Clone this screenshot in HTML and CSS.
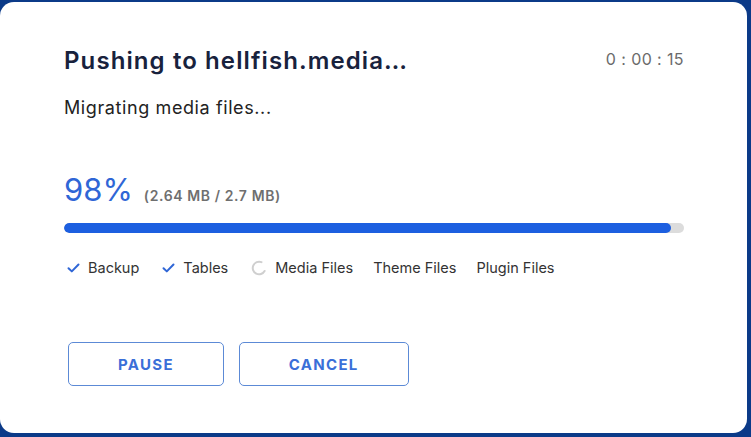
FILE: index.html
```html
<!DOCTYPE html>
<html lang="en">
<head>
    <meta charset="UTF-8">
    <title>Migration progress</title>
    <link rel="stylesheet" href="styles.css">
</head>
<body>
    <div class="card">
        <!-- Header -->
        <div class="card-header">
            <h1 class="title">Pushing to hellfish.media…</h1>
            <span class="timer">0 : 00 : 15</span>
        </div>
        <p class="status">Migrating media files...</p>

        <!-- Progress -->
        <div class="progress-info">
            <span class="percent">98%</span>
            <span class="size">(2.64 MB / 2.7 MB)</span>
        </div>
        <div class="progress-track">
            <div class="progress-fill" style="width: 97.9%"></div>
        </div>

        <!-- Stages -->
        <ul class="stages">
            <li class="stage done">
                <svg class="stage-icon" width="13" height="10" viewBox="0 0 13 10"><path d="M1.5 5.2 L4.8 8.4 L11.5 1.5" fill="none" stroke="#2f66d6" stroke-width="2" stroke-linecap="round" stroke-linejoin="round"/></svg>
                Backup
            </li>
            <li class="stage done">
                <svg class="stage-icon" width="13" height="10" viewBox="0 0 13 10"><path d="M1.5 5.2 L4.8 8.4 L11.5 1.5" fill="none" stroke="#2f66d6" stroke-width="2" stroke-linecap="round" stroke-linejoin="round"/></svg>
                Tables
            </li>
            <li class="stage active">
                <svg class="stage-icon" width="16" height="16" viewBox="0 0 16 16"><path d="M10.5 2.2 A6.3 6.3 0 1 0 13.6 11" fill="none" stroke="#cfcfcf" stroke-width="2" stroke-linecap="round"/></svg>
                Media Files
            </li>
            <li class="stage">Theme Files</li>
            <li class="stage">Plugin Files</li>
        </ul>

        <!-- Actions -->
        <div class="actions">
            <button class="btn">PAUSE</button>
            <button class="btn">CANCEL</button>
        </div>
    </div>
</body>
</html>
```

FILE: styles.css
```css
body {
    margin: 0;
    background: #0b3a88;
    font-family: Inter, "Noto Sans", sans-serif;
}

.card {
    margin: 2px 4px 4px 0;
    height: 431px;
    box-sizing: border-box;
    padding: 44px 63px 0 64px;
    background: white;
    border-radius: 14px;
}

.card-header {
    display: flex;
    justify-content: space-between;
    align-items: center;
}

.title {
    margin: 0;
    font-size: 24px;
    line-height: 30px;
    font-weight: 600;
    color: #18223d;
    letter-spacing: 1.1px;
}

.timer {
    font-size: 16px;
    letter-spacing: 0.4px;
    color: #6b6b6b;
    margin-top: -4px;
}

.status {
    margin: 20px 0 0;
    font-size: 18px;
    line-height: 24px;
    letter-spacing: 0.6px;
    color: #222;
}

.progress-info {
    margin-top: 50px;
    display: flex;
    align-items: baseline;
    gap: 11px;
    line-height: 40px;
}

.percent {
    font-size: 31px;
    font-weight: 400;
    color: #2f66d6;
}

.size {
    font-size: 14px;
    font-weight: 600;
    letter-spacing: 0.6px;
    color: #6f6f6f;
}

.progress-track {
    margin-top: 7px;
    height: 10px;
    background: #dcdcdc;
    border-radius: 5px;
    overflow: hidden;
}

.progress-fill {
    height: 100%;
    background: #1d5fe0;
    border-radius: 5px;
}

.stages {
    list-style: none;
    margin: 25px 0 0;
    padding: 0;
    display: flex;
    gap: 20px;
    font-size: 14.5px;
    line-height: 20px;
    letter-spacing: 0;
    color: #333;
}

.stage {
    display: flex;
    align-items: center;
    gap: 8px;
}

.stage-icon {
    margin-left: 3px;
}

.actions {
    margin-top: 64px;
    padding-left: 4px;
    display: flex;
    gap: 15px;
}

.btn {
    height: 44px;
    padding: 0 49px;
    background: white;
    border: 1.5px solid #5c8ad6;
    border-radius: 5px;
    font-family: Inter, "Noto Sans", sans-serif;
    font-size: 15px;
    font-weight: 700;
    letter-spacing: 1.3px;
    color: #3a6fd8;
    cursor: pointer;
}
```
